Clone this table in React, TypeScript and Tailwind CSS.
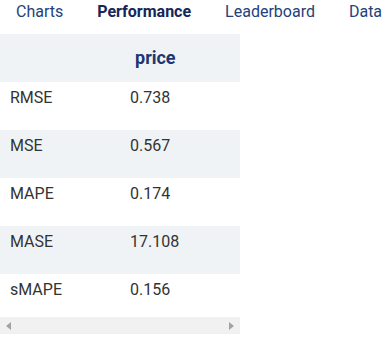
const tabs = [
  { label: "Charts", active: false },
  { label: "Performance", active: true },
  { label: "Leaderboard", active: false },
  { label: "Data", active: false },
];

const rows = [
  { metric: "RMSE", value: "0.738" },
  { metric: "MSE", value: "0.567" },
  { metric: "MAPE", value: "0.174" },
  { metric: "MASE", value: "17.108" },
  { metric: "sMAPE", value: "0.156" },
];

export default function App() {
  return (
    <div className="w-[387px] h-[338px] bg-white overflow-hidden font-['Roboto',sans-serif]">
      <div className="flex h-[34px] gap-0.5 whitespace-nowrap">
        {tabs.map((t) => (
          <div
            key={t.label}
            className={
              "px-4 text-[16px] leading-[23px] " +
              (t.active ? "font-bold text-[#14275a]" : "text-[#24417a]")
            }
          >
            {t.label}
          </div>
        ))}
      </div>

      <div className="w-[240px]">
        <div className="flex h-12 bg-[#f0f3f6]">
          <div className="w-[120px]" />
          <div className="pl-[15px] text-[18px] font-bold leading-[48px] text-[#1e3670]">
            price
          </div>
        </div>
        {rows.map((r, i) => (
          <div
            key={r.metric}
            className={
              "flex text-[16px] leading-8 text-[#333] " +
              (i === rows.length - 1 ? "h-[43px] " : "h-12 ") +
              (i % 2 === 1 ? "bg-[#f0f3f6]" : "bg-white")
            }
          >
            <div className="w-[120px] pl-2.5">{r.metric}</div>
            <div className="pl-2.5">{r.value}</div>
          </div>
        ))}
        <div className="flex h-[17px] items-center justify-between bg-[#f1f1f1] px-[6px]">
          <svg width="5" height="8" viewBox="0 0 5 8">
            <path d="M5 0 L0 4 L5 8 Z" fill="#a3a3a3" />
          </svg>
          <svg width="5" height="8" viewBox="0 0 5 8">
            <path d="M0 0 L5 4 L0 8 Z" fill="#a3a3a3" />
          </svg>
        </div>
      </div>
    </div>
  );
}
